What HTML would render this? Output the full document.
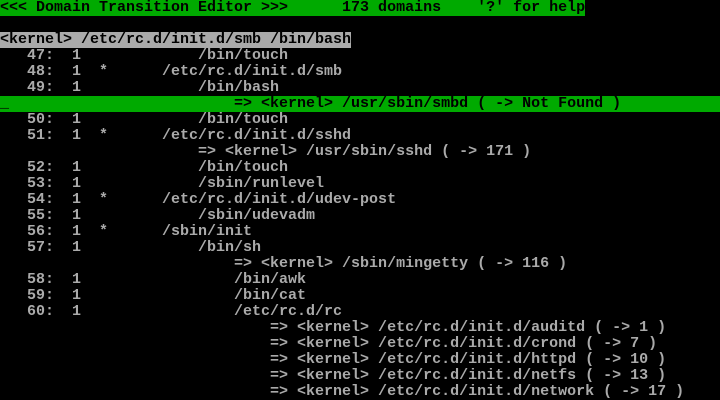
<!DOCTYPE html>
<html><head><meta charset="utf-8"><style>
html,body{margin:0;padding:0;background:#000;width:720px;height:400px;overflow:hidden}
.t{font-family:"Liberation Mono","DejaVu Sans Mono",monospace;font-size:15px;line-height:16px;color:#aaa;font-weight:bold}
.l{height:16px;overflow:hidden;white-space:pre}
.g{background:#00aa00;color:#000}
.w{background:#aaa;color:#000}
</style></head><body><div class="t">
<div class="l"><span class="g">&lt;&lt;&lt; Domain Transition Editor &gt;&gt;&gt;      173 domains    '?' for help</span></div>
<div class="l"> </div>
<div class="l"><span class="w">&lt;kernel&gt; /etc/rc.d/init.d/smb /bin/bash</span></div>
<div class="l">   47:  1             /bin/touch</div>
<div class="l">   48:  1  *      /etc/rc.d/init.d/smb</div>
<div class="l">   49:  1             /bin/bash</div>
<div class="l g">_                         =&gt; &lt;kernel&gt; /usr/sbin/smbd ( -&gt; Not Found )                                    </div>
<div class="l">   50:  1             /bin/touch</div>
<div class="l">   51:  1  *      /etc/rc.d/init.d/sshd</div>
<div class="l">                      =&gt; &lt;kernel&gt; /usr/sbin/sshd ( -&gt; 171 )</div>
<div class="l">   52:  1             /bin/touch</div>
<div class="l">   53:  1             /sbin/runlevel</div>
<div class="l">   54:  1  *      /etc/rc.d/init.d/udev-post</div>
<div class="l">   55:  1             /sbin/udevadm</div>
<div class="l">   56:  1  *      /sbin/init</div>
<div class="l">   57:  1             /bin/sh</div>
<div class="l">                          =&gt; &lt;kernel&gt; /sbin/mingetty ( -&gt; 116 )</div>
<div class="l">   58:  1                 /bin/awk</div>
<div class="l">   59:  1                 /bin/cat</div>
<div class="l">   60:  1                 /etc/rc.d/rc</div>
<div class="l">                              =&gt; &lt;kernel&gt; /etc/rc.d/init.d/auditd ( -&gt; 1 )</div>
<div class="l">                              =&gt; &lt;kernel&gt; /etc/rc.d/init.d/crond ( -&gt; 7 )</div>
<div class="l">                              =&gt; &lt;kernel&gt; /etc/rc.d/init.d/httpd ( -&gt; 10 )</div>
<div class="l">                              =&gt; &lt;kernel&gt; /etc/rc.d/init.d/netfs ( -&gt; 13 )</div>
<div class="l">                              =&gt; &lt;kernel&gt; /etc/rc.d/init.d/network ( -&gt; 17 )</div>
</div></body></html>
